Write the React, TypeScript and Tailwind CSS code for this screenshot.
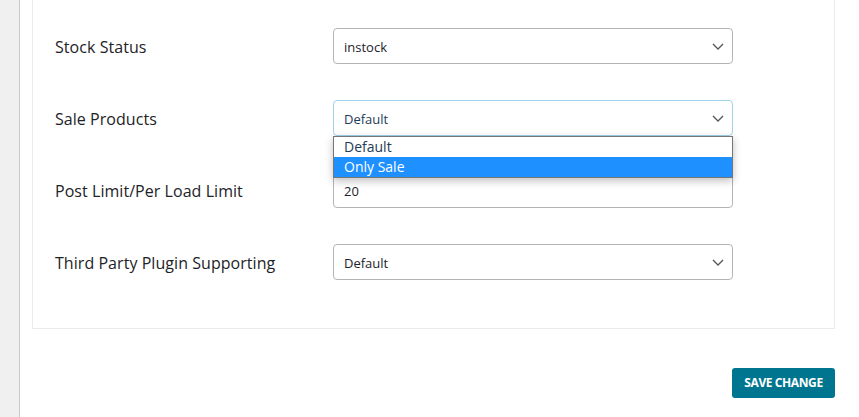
import React from "react";

const FONT = { fontFamily: '"Segoe UI", "Open Sans", "Noto Sans", sans-serif' };

function Chevron() {
  return (
    <svg width="12" height="7" viewBox="0 0 12 7" className="shrink-0">
      <path d="M1 1l5 5 5-5" fill="none" stroke="#50575e" strokeWidth="1.3" />
    </svg>
  );
}

function SelectBox({ value, focused }: { value: string; focused?: boolean }) {
  return (
    <div
      className={`flex h-[36px] w-[400px] items-center justify-between rounded-[4px] border bg-white pl-[10px] pr-[8px] text-[13px] ${
        focused ? "border-[#9fd3ec] text-[#1f3b57]" : "border-[#b4b4b4] text-[#1d2327]"
      }`}
    >
      <span className="pt-[3px]">{value}</span>
      <Chevron />
    </div>
  );
}

function Row({ label, children }: { label: string; children: React.ReactNode }) {
  return (
    <div className="flex items-center">
      <div className="w-[278px] shrink-0 pt-[1px] text-[16px] tracking-[0.05px] text-[#1d2327]">{label}</div>
      {children}
    </div>
  );
}

export default function App() {
  return (
    <div className="flex h-[417px] w-[859px] overflow-hidden bg-white" style={FONT}>
      <div className="w-[20px] shrink-0 border-r border-[#c8c8c8] bg-[#f0f0f1]" />

      <div className="flex flex-1 flex-col pl-[12px] pr-[24px]">
        {/* Settings card */}
        <div className="flex flex-col gap-[36px] border border-t-0 border-[#ebebeb] pt-[28px] pb-[48px] pl-[22px]">
          <Row label="Stock Status">
            <SelectBox value="instock" />
          </Row>

          <Row label="Sale Products">
            <div className="relative">
              <SelectBox value="Default" focused />
              <div className="absolute left-0 top-[36px] z-10 w-[400px] border border-[#767676] bg-white text-[14px] leading-[20px] shadow-[0_3px_8px_rgba(0,0,0,0.25)]">
                <div className="pl-[10px] text-[#1f3b57]">Default</div>
                <div className="bg-[#1e90ff] pl-[10px] text-white">Only Sale</div>
              </div>
            </div>
          </Row>

          <Row label="Post Limit/Per Load Limit">
            <div className="flex h-[36px] w-[400px] items-center rounded-[4px] border border-[#b4b4b4] bg-white pl-[10px] pt-[3px] text-[13px] text-[#1d2327]">
              20
            </div>
          </Row>

          <Row label="Third Party Plugin Supporting">
            <SelectBox value="Default" />
          </Row>
        </div>

        <div className="mt-[39px] flex justify-end">
          <button className="h-[30px] w-[103px] rounded-[3px] bg-[#00758f] text-[12px] font-bold tracking-[-0.4px] text-white">
            SAVE CHANGE
          </button>
        </div>
      </div>
    </div>
  );
}
